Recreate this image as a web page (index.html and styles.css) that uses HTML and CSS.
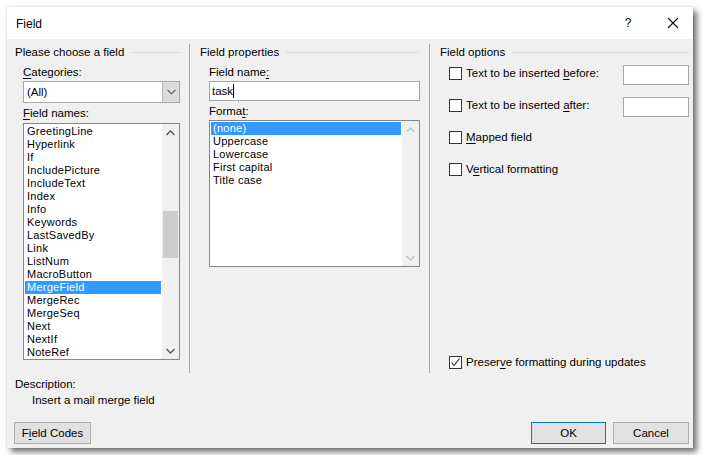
FILE: index.html
```html
<!DOCTYPE html>
<html>
<head>
<meta charset="utf-8">
<link rel="stylesheet" href="styles.css">
</head>
<body>
<div class="dialog">
  <div class="titlebar">
    <span class="title">Field</span>
    <span class="help">?</span>
    <span class="close"><svg width="12" height="12" viewBox="0 0 12 12"><path d="M1 1 L11 11 M11 1 L1 11" stroke="#111" stroke-width="1.1" fill="none"/></svg></span>
  </div>
  <div class="main">
    <div class="columns">
      <section class="col col1">
        <div class="group-head"><span>Please choose a field</span><i class="rule"></i></div>
        <div class="inner">
          <div class="lbl lbl-cat"><u>C</u>ategories:</div>
          <div class="combo">
            <span class="combo-text">(All)</span>
            <span class="combo-btn"><svg width="9" height="6" viewBox="0 0 9 6"><path d="M0.5 0.8 L4.5 4.8 L8.5 0.8" stroke="#555" stroke-width="1.1" fill="none"/></svg></span>
          </div>
          <div class="lbl lbl-names"><u>F</u>ield names:</div>
          <div class="listbox names">
            <div class="items">
              <div class="item">GreetingLine</div>
              <div class="item">Hyperlink</div>
              <div class="item">If</div>
              <div class="item">IncludePicture</div>
              <div class="item">IncludeText</div>
              <div class="item">Index</div>
              <div class="item">Info</div>
              <div class="item">Keywords</div>
              <div class="item">LastSavedBy</div>
              <div class="item">Link</div>
              <div class="item">ListNum</div>
              <div class="item">MacroButton</div>
              <div class="item sel">MergeField</div>
              <div class="item">MergeRec</div>
              <div class="item">MergeSeq</div>
              <div class="item">Next</div>
              <div class="item">NextIf</div>
              <div class="item">NoteRef</div>
            </div>
            <div class="scrollbar">
              <span class="arrow"><svg width="9" height="6" viewBox="0 0 9 6"><path d="M0.5 5 L4.5 1 L8.5 5" stroke="#555" stroke-width="1.3" fill="none"/></svg></span>
              <span class="track"><span class="thumb"></span></span>
              <span class="arrow"><svg width="9" height="6" viewBox="0 0 9 6"><path d="M0.5 1 L4.5 5 L8.5 1" stroke="#555" stroke-width="1.3" fill="none"/></svg></span>
            </div>
          </div>
        </div>
      </section>
      <section class="col col2">
        <div class="group-head"><span>Field properties</span><i class="rule"></i></div>
        <div class="inner">
          <div class="lbl lbl-fname">Field name<u>:</u></div>
          <div class="textbox"><span>task</span><i class="caret"></i></div>
          <div class="lbl lbl-format">Forma<u>t</u>:</div>
          <div class="listbox format">
            <div class="items">
              <div class="item sel">(none)</div>
              <div class="item">Uppercase</div>
              <div class="item">Lowercase</div>
              <div class="item">First capital</div>
              <div class="item">Title case</div>
            </div>
            <div class="scrollbar disabled">
              <span class="arrow"><svg width="9" height="6" viewBox="0 0 9 6"><path d="M0.5 5 L4.5 1 L8.5 5" stroke="#c4c4c4" stroke-width="1.3" fill="none"/></svg></span>
              <span class="track"></span>
              <span class="arrow"><svg width="9" height="6" viewBox="0 0 9 6"><path d="M0.5 1 L4.5 5 L8.5 1" stroke="#c4c4c4" stroke-width="1.3" fill="none"/></svg></span>
            </div>
          </div>
        </div>
      </section>
      <section class="col col3">
        <div class="group-head"><span>Field options</span><i class="rule"></i></div>
        <div class="inner opts">
          <div class="opt">
            <span class="check"></span>
            <span class="opt-text">Text to be inserted <u>b</u>efore:</span>
            <span class="smallbox"></span>
          </div>
          <div class="opt">
            <span class="check"></span>
            <span class="opt-text">Text to be inserted <u>a</u>fter:</span>
            <span class="smallbox"></span>
          </div>
          <div class="opt">
            <span class="check"></span>
            <span class="opt-text"><u>M</u>apped field</span>
          </div>
          <div class="opt">
            <span class="check"></span>
            <span class="opt-text">V<u>e</u>rtical formatting</span>
          </div>
          <div class="opt preserve">
            <span class="check"><svg width="11" height="11" viewBox="0 0 11 11"><path d="M1.5 5.5 L4 8.5 L9.5 1.5" stroke="#222" stroke-width="1.1" fill="none"/></svg></span>
            <span class="opt-text">Preser<u>v</u>e formatting during updates</span>
          </div>
        </div>
      </section>
    </div>
    <div class="desc">
      <div class="desc-label">Description:</div>
      <div class="desc-text">Insert a mail merge field</div>
    </div>
    <div class="buttons">
      <button class="btn btn-codes">F<u>i</u>eld Codes</button>
      <span class="spacer"></span>
      <button class="btn btn-ok">OK</button>
      <button class="btn btn-cancel">Cancel</button>
    </div>
  </div>
</div>
</body>
</html>
```

FILE: styles.css
```css
* { box-sizing: border-box; }
html, body { margin: 0; padding: 0; background: #ffffff; }
body {
  padding: 7px;
  font-family: "Liberation Sans", Arial, sans-serif;
  font-size: 11.5px;
  color: #000;
  line-height: 16px;
}
u { text-decoration: underline; text-underline-offset: 2px; text-decoration-thickness: 1px; }

.dialog {
  width: 686px;
  height: 441px;
  background: #f0f0f0;
  display: flex;
  flex-direction: column;
  box-shadow: 0 0 2px rgba(0,0,0,0.18), 4px 4px 6px rgba(0,0,0,0.55);
}

.titlebar {
  height: 32px;
  background: #ffffff;
  display: flex;
  align-items: center;
  padding-left: 9px;
}
.title { flex: 1; font-size: 12px; padding-top: 1px; }
.help { width: 10px; text-align: center; margin-right: 34px; font-size: 12px; }
.close { width: 12px; height: 12px; display: flex; margin-right: 14px; }

.main {
  flex: 1;
  display: flex;
  flex-direction: column;
  padding-top: 5px;
}

.columns {
  display: flex;
  height: 329px;
}
.col { height: 100%; display: flex; flex-direction: column; }
.col1 { width: 183px; padding-left: 8px; border-right: 1px solid #a8a8a8; }
.col2 { width: 240px; padding-left: 10px; border-right: 1px solid #a8a8a8; }
.col3 { flex: 1; padding-left: 10px; }

.group-head { display: flex; align-items: center; height: 16px; white-space: nowrap; }
.rule { flex: 1; height: 1px; background: #dcdcdc; margin-left: 7px; }
.col1 .rule { margin-right: 9px; }
.col2 .rule { margin-right: 10px; }
.col3 .rule { margin-right: 4px; }

.inner { display: flex; flex-direction: column; }
.col1 .inner { padding-left: 8px; }
.col2 .inner { padding-left: 9px; }
.col3 .inner { padding-left: 9px; flex: 1; }

.lbl { height: 16px; white-space: nowrap; }
.lbl-cat, .lbl-fname { margin-top: 4px; }
.lbl-names { margin-top: 2px; }
.lbl-format { margin-top: 2px; }

.combo {
  margin-top: 1px;
  width: 157px;
  height: 22px;
  border: 1px solid #a6a6a6;
  background: #fff;
  display: flex;
}
.combo-text { flex: 1; padding-left: 3px; line-height: 20px; }
.combo-btn {
  width: 17px;
  background: #dcdcdc;
  border-left: 1px solid #b8b8b8;
  display: flex;
  align-items: center;
  justify-content: center;
}

.listbox {
  border: 1px solid #82878f;
  background: #fff;
  display: flex;
}
.names { margin-top: 2px; width: 157px; height: 237px; }
.format { margin-top: 1px; width: 211px; height: 147px; }

.items { flex: 1; padding: 1px; overflow: hidden; }
.format .items { padding-top: 1px; }
.item { height: 13px; line-height: 13px; padding-left: 2px; white-space: nowrap; font-size: 11px; letter-spacing: 0.25px; }
.item.sel { background: #3399ff; color: #fff; }

.scrollbar {
  width: 17px;
  background: #f0f0f0;
  display: flex;
  flex-direction: column;
}
.arrow { height: 17px; display: flex; align-items: center; justify-content: center; }
.track { flex: 1; position: relative; }
.thumb {
  position: absolute;
  left: 1px;
  width: 15px;
  top: 70px;
  height: 47px;
  background: #cdcdcd;
}

.textbox {
  margin-top: 1px;
  width: 211px;
  height: 20px;
  border: 1px solid #a6a6a6;
  background: #fff;
  display: flex;
  align-items: center;
  padding-left: 2px;
}
.caret { display: inline-block; width: 1px; height: 14px; background: #000; margin-left: 0px; }

.opts { padding-top: 5px; }
.opt { display: flex; align-items: flex-start; height: 20px; margin-bottom: 12px; white-space: nowrap; }
.check {
  width: 13px;
  height: 13px;
  border: 1px solid #333;
  background: #fff;
  margin-top: 2px;
  margin-right: 4px;
  display: flex;
  align-items: center;
  justify-content: center;
}
.opt-text { line-height: 16px; margin-top: 0px; flex: 0 0 auto; }
.smallbox {
  margin-left: auto;
  margin-right: 4px;
  width: 66px;
  height: 20px;
  border: 1px solid #a6a6a6;
  background: #fff;
}
.opt.preserve { margin-top: auto; margin-bottom: 3px; height: 16px; align-items: center; }
.opt.preserve .check { margin-top: 0; }

.desc { padding-left: 8px; margin-top: 3px; }
.desc-label { height: 16px; }
.desc-text { height: 16px; padding-left: 17px; }

.buttons {
  display: flex;
  margin-top: 14px;
  padding-left: 7px;
  padding-right: 4px;
}
.spacer { flex: 1; }
.btn {
  font-family: inherit;
  font-size: 11.5px;
  color: #000;
  height: 22px;
  background: #e1e1e1;
  border: 1px solid #adadad;
  padding: 0;
  line-height: 18px;
}
.btn-codes { width: 77px; }
.btn-ok { width: 75px; border-color: #0078d7; margin-right: 7px; }
.btn-cancel { width: 76px; }
```
